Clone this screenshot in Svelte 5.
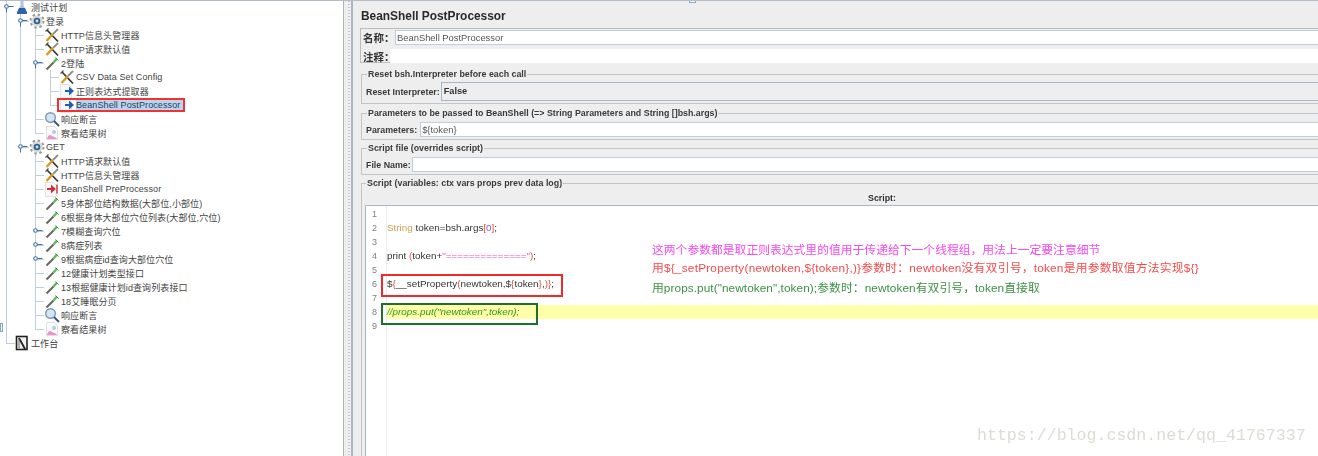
<script>
  const rows = [
    { d: 0, icon: "plan", text: "测试计划", open: true },
    { d: 1, icon: "gear", text: "登录", open: true },
    { d: 2, icon: "tools", text: "HTTP信息头管理器" },
    { d: 2, icon: "tools", text: "HTTP请求默认值" },
    { d: 2, icon: "pipette", text: "2登陆", open: true },
    { d: 3, icon: "tools", text: "CSV Data Set Config" },
    { d: 3, icon: "post", text: "正则表达式提取器" },
    { d: 3, icon: "post", text: "BeanShell PostProcessor", selected: true },
    { d: 2, icon: "search", text: "响应断言" },
    { d: 2, icon: "graph", text: "察看结果树" },
    { d: 1, icon: "gear", text: "GET", open: true },
    { d: 2, icon: "tools", text: "HTTP请求默认值" },
    { d: 2, icon: "tools", text: "HTTP信息头管理器" },
    { d: 2, icon: "pre", text: "BeanShell PreProcessor" },
    { d: 2, icon: "pipette", text: "5身体部位结构数据(大部位,小部位)" },
    { d: 2, icon: "pipette", text: "6根据身体大部位穴位列表(大部位,穴位)" },
    { d: 2, icon: "pipette", text: "7模糊查询穴位", closed: true },
    { d: 2, icon: "pipette", text: "8病症列表", closed: true },
    { d: 2, icon: "pipette", text: "9根据病症id查询大部位穴位", closed: true },
    { d: 2, icon: "pipette", text: "12健康计划类型接口" },
    { d: 2, icon: "pipette", text: "13根据健康计划id查询列表接口" },
    { d: 2, icon: "pipette", text: "18艾睡眠分页" },
    { d: 2, icon: "search", text: "响应断言" },
    { d: 2, icon: "graph", text: "察看结果树" },
    { d: 0, icon: "bench", text: "工作台", last: true },
  ];

  const handleX = [6, 20, 35, 50];
  const rowY = (i) => i * 14 + 7;

  // vertical guides of the tree
  const guides = [
    [6, 0, 343],
    [20, 14, 147],
    [35, 28, 133],
    [35, 154, 329],
    [50, 70, 105],
  ];

  const codeLines = [1, 2, 3, 4, 5, 6, 7, 8, 9];
</script>

{#snippet icon(name)}
  <svg class="icon" viewBox="0 0 16 16">
    {#if name === "plan"}
      <path d="M6.5 1h3v5l3.5 7.5v1.5H3v-1.5L6.5 6z" fill="#b9c4d2" />
      <path d="M5 9h6l2 4.5V15H3v-1.5z" fill="#2b62b5" />
    {:else if name === "gear"}
      <circle cx="8" cy="8" r="6.4" fill="none" stroke="#9a9a92" stroke-width="2.2" stroke-dasharray="2.4 2.6" />
      <circle cx="8" cy="8" r="5.6" fill="#dcdcd6" />
      <circle cx="8" cy="8" r="3.3" fill="#2f6396" />
      <circle cx="8" cy="8" r="1.4" fill="#cfe0f0" />
    {:else if name === "tools"}
      <path d="M3 3 14 14.5" stroke="#333" stroke-width="1.7" />
      <path d="M14 2 9 7" stroke="#8d8d8d" stroke-width="1.8" />
      <path d="M9 7 2.5 14" stroke="#d99a1e" stroke-width="2.4" />
      <path d="M1.5 4.5 4.5 1.5" stroke="#555" stroke-width="1.3" />
    {:else if name === "pipette"}
      <path d="M2.5 14.5 9.5 7.5" stroke="#6a6a64" stroke-width="2.1" />
      <path d="M9.5 7.5 13 3.5" stroke="#62bc64" stroke-width="2.6" />
      <path d="M11.5 2.5 14.5 5.5" stroke="#3f8f44" stroke-width="1" />
    {:else if name === "post" || name === "pre"}
      <path d="M1.5 1.5h8l3 3v11h-11z" fill="#f8f8f8" stroke="#e2e2e2" />
      {#if name === "post"}
        <path d="M6 7h4V3.6L15 8l-5 4.4V9H6z" fill="#1e5fb4" />
      {:else}
        <path d="M3 7h4V3.6L12 8l-5 4.4V9H3z" fill="#c8323c" />
        <path d="M13 3.5v9" stroke="#c8323c" stroke-width="1.4" />
      {/if}
    {:else if name === "search"}
      <circle cx="6.5" cy="6.5" r="4.8" fill="#d4e6f5" stroke="#7f99b2" stroke-width="1.4" />
      <path d="M10 10 15 15" stroke="#3a5a7a" stroke-width="2" />
    {:else if name === "graph"}
      <path d="M2.5 1.5h8l3 3v10h-11z" fill="#fbfbfb" stroke="#dedede" />
      <path d="M3 14c1-4 3-5 5-3 1.5 1 3 .5 5 3z" fill="#f090cc" />
      <circle cx="10" cy="7" r="2" fill="#a9cdee" />
    {:else if name === "bench"}
      <rect x="2.5" y="1.5" width="10.5" height="13" fill="#f2f2f2" stroke="#222" stroke-width="1.6" />
      <path d="M5 3 11 14" stroke="#222" stroke-width="1.8" />
      <path d="M5 3v10" stroke="#666" />
    {/if}
  </svg>
{/snippet}

<div class="screen">
  <aside class="tree">
    <svg class="links" width="344" height="456">
      {#each guides as [x, y1, y2]}
        <line x1={x + 0.5} x2={x + 0.5} {y1} {y2} />
      {/each}
      {#each rows as row, i}
        {#if row.d > 0 || row.last}
          <line
            x1={handleX[row.d]}
            x2={handleX[row.d] + 9}
            y1={rowY(i) + 0.5}
            y2={rowY(i) + 0.5}
          />
        {/if}
      {/each}
      {#each rows as row, i}
        {#if row.open || row.closed}
          <g class="handle">
            <circle cx={handleX[row.d] + 0.5} cy={rowY(i) - 0.5} r="1.8" />
            <path d={`M${handleX[row.d] + 2.5} ${rowY(i) - 0.5}h5`} />
            {#if row.open}
              <path d={`M${handleX[row.d] + 0.5} ${rowY(i) + 1.5}v4`} />
            {/if}
          </g>
        {/if}
      {/each}
    </svg>
    {#each rows as row}
      <div class="row" style={`padding-left:${16 + 15 * row.d}px`}>
        <span class="icon-box">{@render icon(row.icon)}</span>
        <span class="label" class:selected={row.selected}>{row.text}</span>
        {#if row.selected}<span class="red-mark"></span>{/if}
      </div>
    {/each}
  </aside>

  <div class="divider"><i></i></div>

  <main class="panel">
    <h1>BeanShell PostProcessor</h1>

    <section class="names">
      <div class="name-row">
        <label for="name">名称：</label>
        <input id="name" readonly value="BeanShell PostProcessor" />
      </div>
      <div class="name-row comment">
        <label for="comment">注释：</label>
        <input id="comment" readonly value="" />
      </div>
    </section>

    <fieldset class="first">
      <legend>Reset bsh.Interpreter before each call</legend>
      <div class="field">
        <span class="field-label">Reset Interpreter:</span>
        <div class="combo">False</div>
      </div>
    </fieldset>

    <fieldset class="second">
      <legend>Parameters to be passed to BeanShell (=&gt; String Parameters and String []bsh.args)</legend>
      <div class="field">
        <label class="field-label" for="params">Parameters:</label>
        <input id="params" readonly value={"${token}"} />
      </div>
    </fieldset>

    <fieldset>
      <legend>Script file (overrides script)</legend>
      <div class="field">
        <label class="field-label" for="file">File Name:</label>
        <input id="file" readonly value="" />
      </div>
    </fieldset>

    <fieldset class="script">
      <legend>Script (variables: ctx vars props prev data log)</legend>
      <div class="script-title">Script:</div>
      <div class="editor">
        <div class="gutter">
          {#each codeLines as n}<div>{n}</div>{/each}
        </div>
        <div class="code">
          <div></div>
          <div><span class="kw">String</span> token=bsh.args<span class="br">[</span><span class="num">0</span><span class="br">]</span>;</div>
          <div></div>
          <div>print <span class="br">(</span>token+<span class="str">"=============="</span><span class="br">)</span>;</div>
          <div></div>
          <div>$<span class="br">{"{"}</span>__setProperty<span class="br">(</span>newtoken,$<span class="br">{"{"}</span>token<span class="br">{"}"}</span>,<span class="br">)</span><span class="br">{"}"}</span>;</div>
          <div></div>
          <div class="current"><em>//props.put("newtoken",token);</em></div>
          <div></div>
        </div>
      </div>
    </fieldset>

    <span class="box red"></span>
    <span class="box green"></span>

    <div class="notes">
      <p class="pink">这两个参数都是取正则表达式里的值用于传递给下一个线程组，用法上一定要注意细节</p>
      <p class="tomato">用${"{"}_setProperty(newtoken,${"{"}token{"}"},){"}"}参数时：newtoken没有双引号，token是用参数取值方法实现${"{"}{"}"}</p>
      <p class="leaf">用props.put("newtoken",token);参数时：newtoken有双引号，token直接取</p>
    </div>
  </main>

  <span class="pin-left"></span>
  <span class="pin-top"></span>
  <span class="watermark">https://blog.csdn.net/qq_41767337</span>
</div>

<style>
  :global(body) {
    margin: 0;
    background: #fff;
  }

  .screen {
    position: relative;
    display: flex;
    width: 1318px;
    height: 456px;
    overflow: hidden;
    font-family: "Liberation Sans", "Noto Sans CJK SC", sans-serif;
    color: #333;
    border-top: 1px solid #b4bcc8;
    box-sizing: border-box;
    filter: blur(0.3px);
  }

  /* left tree */
  .tree {
    position: relative;
    flex: 0 0 344px;
    box-sizing: border-box;
    margin-top: -1px;
    border-right: 1px solid #aab4c2;
    background: #fff;
  }
  .links {
    position: absolute;
    left: 0;
    top: 0;
  }
  .links line {
    stroke: #bfcfe2;
    stroke-width: 1;
  }
  .handle circle {
    fill: #fff;
    stroke: #3f6fb0;
    stroke-width: 1.1;
  }
  .handle path {
    stroke: #3f6fb0;
    fill: none;
  }
  .row {
    position: relative;
    display: flex;
    align-items: center;
    height: 14px;
    font-size: 9px;
    letter-spacing: 0.1px;
    color: #444;
    white-space: nowrap;
  }
  .icon-box {
    flex: 0 0 15px;
    display: flex;
    margin-left: -2px;
    margin-right: 1px;
  }
  .icon {
    width: 16px;
    height: 16px;
    flex: none;
  }
  .label.selected {
    background: #b9d4ef;
    line-height: 13px;
    padding: 0 3px 0 0;
    color: #2c3e55;
  }
  .red-mark {
    position: absolute;
    left: 57px;
    top: 0;
    width: 128px;
    height: 14px;
    box-sizing: border-box;
    border: 2px solid #f03232;
  }

  .divider {
    flex: 0 0 9px;
    background: #eee;
    border-right: 2px solid #aab6c6;
    box-sizing: border-box;
    padding-left: 4px;
  }
  .divider i {
    display: block;
    width: 2px;
    height: 100%;
    background: repeating-linear-gradient(#c4c4c4 0 1px, #f4f4f4 1px 3px);
  }

  /* right panel */
  .panel {
    position: relative;
    flex: 0 0 1046px;
    box-sizing: border-box;
    padding: 0 0 0 7px;
    background: #eee;
  }
  h1 {
    margin: 0 0 0 1px;
    height: 27px;
    font-size: 11.9px;
    line-height: 30px;
    color: #2a2a2a;
  }
  .names {
    height: 35px;
    box-sizing: border-box;
    border: 1px solid #bcbcbc;
    border-right: none;
    display: flex;
    flex-direction: column;
    padding-top: 1px;
    gap: 4px;
  }
  .name-row {
    display: flex;
    align-items: center;
    height: 15px;
  }
  .name-row.comment {
    height: 14px;
  }
  .name-row label {
    width: 34px;
    flex: none;
    padding-left: 2px;
    box-sizing: border-box;
    font-size: 10.5px;
    font-weight: bold;
    white-space: nowrap;
  }
  .name-row.comment label {
    width: 29px;
  }
  input {
    flex: 1;
    min-width: 0;
    height: 100%;
    box-sizing: border-box;
    border: 1px solid #c2cdda;
    border-right: none;
    background: #fff;
    padding: 0 0 0 1px;
    margin: 0;
    outline: none;
    font-family: inherit;
    font-size: 9.4px;
    color: #555;
  }
  .comment input {
    border: none;
  }

  fieldset {
    margin: 3px 0 0 1px;
    padding: 3px 0 2px 4px;
    border: 1px solid #c4c4c4;
    border-right: none;
    min-width: 0;
  }
  fieldset.first {
    margin-top: 6px;
    padding-top: 2px;
  }
  fieldset.second {
    margin-top: 4px;
  }
  fieldset.second .field {
    gap: 3px;
  }
  legend {
    margin-left: 1px;
    padding: 0 1px;
    font-size: 8.85px;
    font-weight: bold;
    line-height: 11px;
    color: #3a3a3a;
  }
  .field {
    display: flex;
    align-items: center;
    height: 15px;
    gap: 1px;
  }
  .field-label {
    flex: none;
    font-size: 8.85px;
    font-weight: bold;
    color: #3a3a3a;
  }
  .combo {
    flex: 1;
    height: 19px;
    box-sizing: border-box;
    border: 1px solid #a6b6c8;
    border-right: none;
    font-size: 9.2px;
    font-weight: bold;
    line-height: 17px;
    padding-left: 2px;
  }
  .field:has(.combo) {
    height: 19px;
  }

  fieldset.script {
    padding: 0 0 0 3px;
    height: 290px;
    box-sizing: border-box;
  }
  .script-title {
    text-align: center;
    font-size: 8.85px;
    font-weight: bold;
    height: 16px;
    line-height: 19px;
  }
  .editor {
    display: flex;
    height: 260px;
    background: #fff;
    border-top: 1px solid #a9b8ca;
    border-left: 1px solid #a9b8ca;
    font-size: 9.9px;
    line-height: 14px;
  }
  .gutter {
    flex: 0 0 21px;
    box-sizing: border-box;
    border-right: 1px solid #ececec;
    padding: 1px 9px 0 0;
    text-align: right;
    font-size: 9px;
    color: #808080;
  }
  .gutter div {
    height: 14px;
  }
  .code {
    flex: 1;
    padding-top: 1px;
    color: #333;
  }
  .code div {
    height: 14px;
  }
  .kw {
    color: #c8a050;
  }
  .br {
    color: #e0503c;
  }
  .num {
    color: #8a50e0;
  }
  .str {
    color: #ff48c8;
  }
  .current {
    background: #ffffaa;
  }
  .current em {
    color: #2e9a18;
  }

  .box {
    position: absolute;
    box-sizing: border-box;
    left: 28px;
  }
  .box.red {
    top: 273px;
    width: 182px;
    height: 23px;
    border: 2px solid #ee2a2a;
  }
  .box.green {
    top: 302px;
    width: 157px;
    height: 22px;
    border: 2px solid #1f6e2c;
  }

  .notes {
    position: absolute;
    left: 299px;
    top: 240px;
    font-family: "Liberation Sans", "Noto Sans CJK SC", sans-serif;
    font-size: 11.8px;
    line-height: 19px;
    white-space: nowrap;
  }
  .notes p {
    margin: 0;
  }
  .notes .leaf {
    margin-top: 1px;
    letter-spacing: 0.07px;
  }
  .notes .tomato {
    margin-top: -1px;
    letter-spacing: 0.22px;
  }
  .pink {
    color: #f848f0;
  }
  .tomato {
    color: #fa4a4a;
  }
  .leaf {
    color: #3f9144;
  }

  .pin-left {
    position: absolute;
    left: 0;
    top: 322px;
    width: 3px;
    height: 9px;
    box-sizing: border-box;
    border: 1px solid #7fa4c8;
    background: #fff;
  }
  .pin-top {
    position: absolute;
    left: 689px;
    top: -1px;
    width: 7px;
    height: 3px;
    box-sizing: border-box;
    border: 1px solid #8aa8c8;
    background: #fff;
  }
  .watermark {
    position: absolute;
    left: 977px;
    top: 425px;
    font-family: "Liberation Mono", monospace;
    font-size: 16.6px;
    line-height: 20px;
    color: #dcdcd4;
    white-space: nowrap;
  }
</style>
